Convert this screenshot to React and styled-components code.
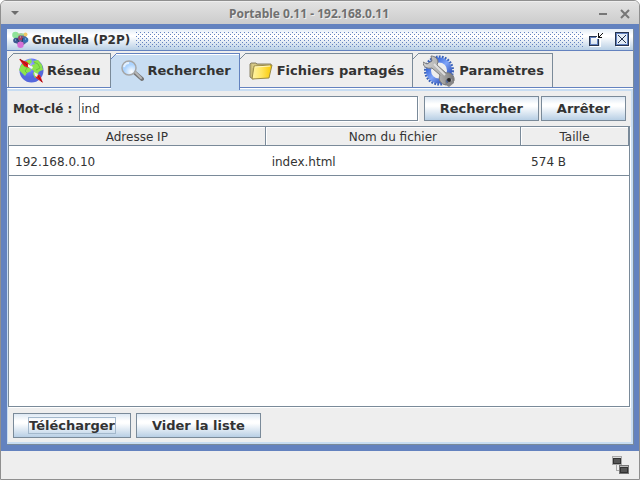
import React, { useState } from "react";
import styled, { createGlobalStyle, css } from "styled-components";

const BLUE = "#6382bf";
const STEEL = "#7a8a99";
const PALE = "#c8ddf2";
const INK = "#333333";

const GlobalStyle = createGlobalStyle`
  * { box-sizing: border-box; }
  body { margin: 0; background: #ffffff; }
`;

const Window = styled.div`
  display: flex;
  flex-direction: column;
  min-height: 100vh;
  border: 1px solid #8f8f8f;
  border-radius: 6px 6px 0 0;
  overflow: hidden;
  background: #eeeeee;
  color: ${INK};
  font-family: "DejaVu Sans", sans-serif;
  font-size: 12px;
`;

const WindowBar = styled.header`
  display: flex;
  align-items: center;
  height: 23px;
  padding: 0 8px;
  border-top: 1px solid #eeeeee;
  background: linear-gradient(#e2e2e2, #cccccc);
`;

const WindowTitle = styled.h1`
  flex: 1;
  margin: 0;
  padding-top: 2px;
  text-align: center;
  font: bold 12px/16px "Noto Sans", sans-serif;
  color: #707070;
  text-shadow: 1px 1px 0 #efefef;
`;

const BareButton = styled.button`
  display: flex;
  padding: 0;
  border: 0;
  background: none;
`;

const WindowActions = styled.div`
  display: flex;
  gap: 10px;
  padding-top: 1px;
`;

const Frame = styled.main`
  flex: 1;
  display: flex;
  flex-direction: column;
  padding: 5px 5px 6px 6px;
  background: ${BLUE};
`;

const FrameBody = styled.div`
  flex: 1;
  display: flex;
  flex-direction: column;
  background: #eeeeee;
  border-right: 1px solid ${STEEL};
  border-bottom: 1px solid ${STEEL};
`;

const FrameBar = styled.div`
  display: flex;
  align-items: center;
  height: 22px;
  padding: 0 3px 0 5px;
  border-bottom: 1px solid ${BLUE};
  background: linear-gradient(#e3edf7, #ffffff 30%, #ffffff 36%, #b8cfe5);
`;

const FrameTitle = styled.h2`
  margin: 0 6px 0 3px;
  font-size: 12px;
  line-height: 20px;
`;

const Bumps = styled.div`
  flex: 1;
  height: 15px;
  margin-right: 5px;
  background-image: conic-gradient(from 0deg at 1px 1px, transparent 75%, ${BLUE} 0),
    conic-gradient(from 0deg at 1px 1px, transparent 75%, ${BLUE} 0);
  background-size: 4px 4px;
  background-position: 0 0, 2px 2px;
`;

const FrameActions = styled.div`
  display: flex;
  gap: 11px;
`;

const Tabs = styled.div`
  display: flex;
  height: 38px;
  padding: 2px 0 0 1px;
  border-bottom: 1px solid #ffffff;
  background: linear-gradient(${BLUE}, ${BLUE}) 0 100% / 100% 1px no-repeat;
`;

const TabButton = styled.button`
  position: relative;
  display: flex;
  align-items: center;
  gap: ${(p) => p.$gap}px;
  height: ${(p) => (p.$active ? 37 : 34)}px;
  padding: 0 ${(p) => p.$end}px 0 ${(p) => p.$start}px;
  border: solid ${STEEL};
  border-width: 1px 1px 0 0;
  background: #eeeeee;
  color: ${INK};
  font: bold 13px "DejaVu Sans", sans-serif;
  white-space: nowrap;
  ${(p) => p.$first && css`border-left-width: 1px;`}
  ${(p) =>
    p.$active &&
    css`
      padding-bottom: 3px;
      border-color: ${BLUE};
      background: ${PALE};
      box-shadow: inset 0 1px 0 #ffffff;
    `}
`;

const TabCorner = styled.svg`
  position: absolute;
  top: -1px;
  left: ${(p) => (p.$first ? -1 : 0)}px;
`;

const TabPanel = styled.div`
  flex: 1;
  display: flex;
  flex-direction: column;
  padding: 0 1px 0 0;
  border: solid ${PALE};
  border-width: 2px 2px 2px 1px;
`;

const SearchForm = styled.form`
  display: flex;
  align-items: center;
  gap: 2px;
  padding: 5px 4px 5px 5px;
`;

const Label = styled.label`
  margin-right: 5px;
  font-weight: bold;
`;

const TextField = styled.input`
  flex: 1;
  min-width: 0;
  height: 25px;
  margin-right: 4px;
  padding: 0 1px;
  border: 1px solid ${STEEL};
  border-radius: 0;
  background: #ffffff;
  box-shadow: 1px 1px 0 #ffffff;
  color: ${INK};
  font: 12px "DejaVu Sans", sans-serif;
  outline: none;
`;

const PushButton = styled.button`
  height: 25px;
  padding: 0 15px;
  border: 1px solid ${STEEL};
  background: linear-gradient(#dde8f3, #ffffff 30%, #ffffff 40%, #b8cfe5);
  color: ${INK};
  font: bold 13px "DejaVu Sans", sans-serif;
`;

const FocusRing = styled.span`
  display: inline-block;
  line-height: 15px;
  outline: 1px solid #a3b8cc;
`;

const TableArea = styled.div`
  flex: 1;
  border: 1px solid ${STEEL};
  background: #ffffff;
  box-shadow: 1px 1px 0 #ffffff;
`;

const ResultTable = styled.table`
  width: 100%;
  table-layout: fixed;
  border-collapse: separate;
  border-spacing: 0;
`;

const HeadCell = styled.th`
  width: ${(p) => p.$width};
  height: 19px;
  padding: 2px 0 0;
  border: solid ${STEEL};
  border-width: 0 1px 1px 0;
  background: #eeeeee;
  box-shadow: inset 1px 1px 0 #ffffff;
  font-weight: normal;
  line-height: 16px;
`;

const Cell = styled.td`
  height: 30px;
  padding: 2px 0 0 ${(p) => p.$indent}px;
  border-bottom: 1px solid ${STEEL};
  white-space: nowrap;
`;

const ActionRow = styled.div`
  display: flex;
  gap: 5px;
  padding: 6px 4px 4px 5px;
`;

const StatusBar = styled.footer`
  display: flex;
  align-items: center;
  justify-content: flex-end;
  height: 28px;
  padding-right: 9px;
`;

const NodesLogo = () => (
  <svg width="17" height="17" viewBox="0 0 17 17">
    <circle cx="9" cy="8.5" r="6" fill="#5a6797" />
    <circle cx="3.5" cy="4" r="3.3" fill="#8fe39a" />
    <circle cx="13.5" cy="3.5" r="2" fill="#efc86a" />
    <path d="M5 3.5h7" stroke="#a6d88c" strokeWidth="2" />
    <circle cx="4" cy="9.5" r="2.8" fill="#3b578f" />
    <circle cx="8.5" cy="7" r="2.3" fill="#a8405e" />
    <circle cx="13.5" cy="9" r="2.8" fill="#356fb3" />
    <circle cx="8.5" cy="13.7" r="3.2" fill="#d66fd6" />
    <path d="M5 8l2 3M11 7l-1 4" stroke="#28366a" fill="none" />
    <path d="M3 9h1M13 8h1M8 6h1" stroke="#9ec9f2" />
  </svg>
);

const GlobeIcon = () => (
  <svg width="25" height="25" viewBox="0 0 25 25">
    <defs>
      <radialGradient id="sea" cx="38%" cy="28%">
        <stop offset="0" stopColor="#b6c3ff" />
        <stop offset=".65" stopColor="#6676fb" />
        <stop offset="1" stopColor="#5568dc" />
      </radialGradient>
    </defs>
    <circle cx="12.5" cy="12.5" r="12" fill="url(#sea)" />
    <path d="M2 7L7 3l5-2 1 3-3 3 1 3 1 3-4 2-2 3-3-3-3-3zM14 3l5-1 4 5 1 5-3 1-2 2 1 3-4 2-2-4 1-3-3-2 1-4 3-1z" fill="#8de34c" />
    <path d="M5 8l3 2-2 3 2 2M15 4l4 2 2 4-4 2" fill="none" stroke="#6cc33c" />
    <path d="M0 1l8 3 4 4-2 2-5-2z" fill="#e41219" />
    <path d="M1 1l7 6" stroke="#8d1419" />
    <path d="M9 6l5 3-1 2-4-2z" fill="#f4f5f5" />
    <path d="M17 16l4 1 3 8-7-5-1-3z" fill="#ec1820" />
    <path d="M19 18l4 6" stroke="#8d1419" />
    <path d="M15 14l4 2-1 3-2-1z" fill="#eeeeee" />
  </svg>
);

const LensIcon = () => (
  <svg width="24" height="22" viewBox="0 0 24 22">
    <defs>
      <radialGradient id="glass" cx="68%" cy="75%">
        <stop offset="0" stopColor="#ffffff" />
        <stop offset="1" stopColor="#acd4ff" />
      </radialGradient>
    </defs>
    <path d="M14 12l8 7" stroke="#777777" strokeWidth="4" strokeLinecap="round" />
    <path d="M14 11l7 7" stroke="#b8b8b8" strokeWidth="2" strokeLinecap="round" />
    <circle cx="9" cy="8" r="7" fill="url(#glass)" stroke="#a6a6a6" strokeWidth="1.5" />
    <path d="M4 7a5 5 0 0 1 5-4" fill="none" stroke="#e4f1ff" strokeWidth="2" />
  </svg>
);

const FolderIcon = () => (
  <svg width="24" height="18" viewBox="0 0 24 18">
    <defs>
      <linearGradient id="paper">
        <stop offset="0" stopColor="#fff5a8" />
        <stop offset=".5" stopColor="#ffe45c" />
        <stop offset="1" stopColor="#fac900" />
      </linearGradient>
    </defs>
    <path d="M1 15V2l1-1h5l1 1h14v4L4 17z" fill="#c9bb77" stroke="#8a8268" />
    <path d="M3 3h4M3 5h15" stroke="#e3d699" />
    <path d="M5 4l18-1-3 13-17 1z" fill="url(#paper)" stroke="#9b8b48" />
    <path d="M6 5l15-1" stroke="#fff7c5" />
  </svg>
);

const GearWrenchIcon = () => (
  <svg width="32" height="32" viewBox="0 0 32 32">
    <defs>
      <linearGradient id="gear" x2="1" y2="1">
        <stop offset="0" stopColor="#174acb" />
        <stop offset=".5" stopColor="#80a5f8" />
        <stop offset="1" stopColor="#1738a4" />
      </linearGradient>
      <linearGradient id="metal">
        <stop offset="0" stopColor="#d4d4d4" />
        <stop offset=".6" stopColor="#aaaaaa" />
        <stop offset="1" stopColor="#777777" />
      </linearGradient>
    </defs>
    <circle cx="16" cy="15.5" r="13.5" fill="none" stroke="#3a62b8" strokeWidth="3" strokeDasharray="1.8 1.2" />
    <circle cx="16" cy="15.5" r="10.5" fill="none" stroke="url(#gear)" strokeWidth="5" />
    <path d="M21 29l10-5v4l-5 4z" fill="#444444" opacity=".6" />
    <path d="M8 1c4 0 7 3 7 6l-1 3 9 8c5-1 9 3 8 8l-4-3-4 2v5c-6-1-8-6-6-10L9 13c-5 1-9-1-9-6l4 2 5-3z" fill="url(#metal)" stroke="#7b7b7b" />
    <path d="M11 9l11 11" stroke="#dedede" strokeWidth="2" />
    <circle cx="26" cy="25" r="2" fill="#262626" />
  </svg>
);

const TerminalsIcon = () => (
  <svg width="18" height="18" viewBox="0 0 18 18" shapeRendering="crispEdges">
    <path d="M4.5 9v5H8M7.5 9v3H9" fill="none" stroke="#aaaaaa" />
    <rect x=".5" y=".5" width="9" height="8" fill="#dddddd" stroke="#a8a8a8" />
    <rect x="1.5" y="2.5" width="7" height="5" fill="#555555" stroke="#333333" />
    <rect x="7.5" y="9.5" width="9" height="8" fill="#bbbbbb" stroke="#777777" />
    <rect x="8.5" y="11.5" width="7" height="5" fill="#555555" stroke="#333333" />
  </svg>
);

const RestoreIcon = () => (
  <svg width="15" height="15" viewBox="0 0 15 15" shapeRendering="crispEdges">
    <path d="M1 14.5h10V7" fill="none" stroke="#ffffff" />
    <path d="M8 4.5H.5v9h9V7" fill="none" stroke="#26344e" />
    <path d="M7 5.5H1.5v7h7V7" fill="none" stroke={BLUE} />
    <path d="M9.5 1v4H13M10 4.500h1M11 3.5h1M12 2.5h1M13 1.5h1" fill="none" stroke="#111111" />
  </svg>
);

const CloseIcon = () => (
  <svg width="15" height="15" viewBox="0 0 15 15" shapeRendering="crispEdges">
    <path d="M1 14.5h13.5V1" fill="none" stroke="#ffffff" />
    <rect x=".5" y=".5" width="13" height="13" fill="#e3edf7" stroke="#26344e" />
    <rect x="1.5" y="1.5" width="11" height="11" fill="none" stroke={BLUE} />
    <path d="M3 3l8 8M11 3l-8 8" stroke="#26344e" />
  </svg>
);

const tabs = [
  { name: "Réseau", icon: <GlobeIcon />, start: 10, gap: 3, end: 10 },
  { name: "Rechercher", icon: <LensIcon />, start: 9, gap: 3, end: 8 },
  { name: "Fichiers partagés", icon: <FolderIcon />, start: 9, gap: 4, end: 8 },
  { name: "Paramètres", icon: <GearWrenchIcon />, start: 10, gap: 4, end: 8 },
];

function Tab({ item, first, active, onSelect }) {
  return (
    <TabButton type="button" role="tab" aria-selected={active} $active={active} $first={first} $start={item.start} $end={item.end} $gap={item.gap} onClick={onSelect}>
      <TabCorner $first={first} width="7" height="7" viewBox="0 0 7 7" aria-hidden="true">
        <path d="M0 0H6L0 6Z" fill="#eeeeee" />
        <path d="M0 6L6 0" stroke={active ? BLUE : STEEL} />
      </TabCorner>
      {item.icon}
      {item.name}
    </TabButton>
  );
}

export default function App() {
  const [keyword, setKeyword] = useState("ind");
  const [current, setCurrent] = useState(1);
  return (
    <>
      <GlobalStyle />
      <Window>
        <WindowBar>
          <BareButton type="button" aria-label="Menu">
            <svg width="12" height="6" viewBox="0 0 12 6"><path d="M2 1h8L6 5z" fill="#6c6c6c" /></svg>
          </BareButton>
          <WindowTitle>Portable 0.11 - 192.168.0.11</WindowTitle>
          <WindowActions>
            <BareButton type="button" aria-label="Réduire">
              <svg width="12" height="10" viewBox="0 0 12 10"><path d="M2 5h8" stroke="#777777" strokeWidth="2" /></svg>
            </BareButton>
            <BareButton type="button" aria-label="Fermer">
              <svg width="12" height="10" viewBox="0 0 12 10"><path d="M2 1l8 8M10 1L2 9" stroke="#777777" strokeWidth="2" /></svg>
            </BareButton>
          </WindowActions>
        </WindowBar>
        <Frame>
          <FrameBody>
            <FrameBar>
              <NodesLogo />
              <FrameTitle>Gnutella (P2P)</FrameTitle>
              <Bumps />
              <FrameActions>
                <BareButton type="button" aria-label="Restaurer"><RestoreIcon /></BareButton>
                <BareButton type="button" aria-label="Fermer Gnutella"><CloseIcon /></BareButton>
              </FrameActions>
            </FrameBar>
            <Tabs role="tablist">
              {tabs.map((item, i) => (
                <Tab key={item.name} item={item} first={i === 0} active={i === current} onSelect={() => setCurrent(i)} />
              ))}
            </Tabs>
            <TabPanel role="tabpanel">
              <SearchForm onSubmit={(e) => e.preventDefault()}>
                <Label htmlFor="keyword">Mot-clé :</Label>
                <TextField id="keyword" type="text" value={keyword} onChange={(e) => setKeyword(e.target.value)} />
                <PushButton type="submit">Rechercher</PushButton>
                <PushButton type="button">Arrêter</PushButton>
              </SearchForm>
              <TableArea>
                <ResultTable>
                  <thead>
                    <tr>
                      <HeadCell $width="41.4%">Adresse IP</HeadCell>
                      <HeadCell $width="41.2%">Nom du fichier</HeadCell>
                      <HeadCell>Taille</HeadCell>
                    </tr>
                  </thead>
                  <tbody>
                    <tr>
                      <Cell $indent={6}>192.168.0.10</Cell>
                      <Cell $indent={6}>index.html</Cell>
                      <Cell $indent={10}>574 B</Cell>
                    </tr>
                  </tbody>
                </ResultTable>
              </TableArea>
              <ActionRow>
                <PushButton type="button"><FocusRing>Télécharger</FocusRing></PushButton>
                <PushButton type="button">Vider la liste</PushButton>
              </ActionRow>
            </TabPanel>
          </FrameBody>
        </Frame>
        <StatusBar><TerminalsIcon /></StatusBar>
      </Window>
    </>
  );
}
